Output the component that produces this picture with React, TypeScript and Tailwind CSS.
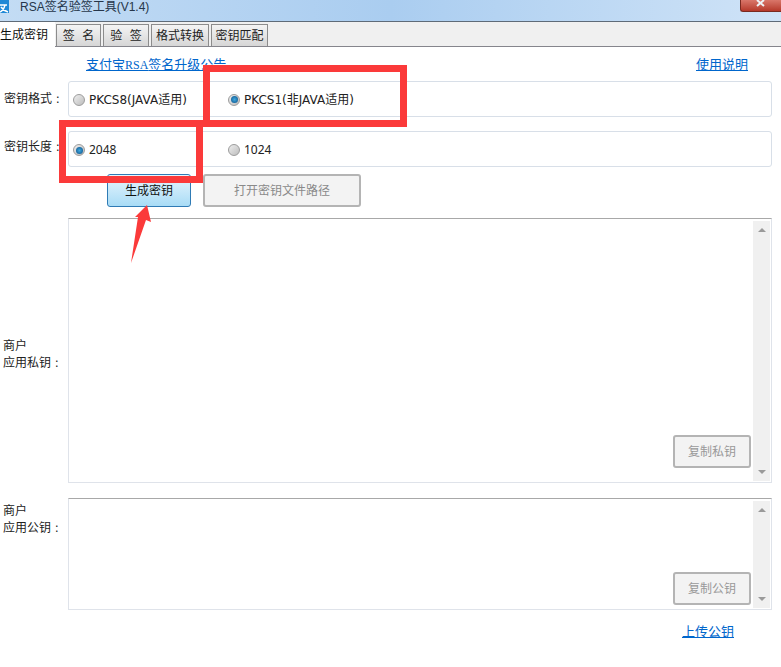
import React from "react";

const font = { fontFamily: '"DejaVu Sans","Noto Sans CJK SC",sans-serif' };

function Radio({ on, label, digits }: { on?: boolean; label: string; digits?: boolean }) {
  return (
    <div className="flex items-center gap-[4px] text-[12px] leading-none text-[#222]">
      <span className="flex h-[12px] w-[12px] items-center justify-center rounded-full border border-[#9c9c9c] bg-gradient-to-br from-[#eeeeee] to-[#bdbdbd]">
        {on && <span className="h-[7px] w-[7px] rounded-full bg-radial from-[#3fa9e0] to-[#0b4f86]" />}
      </span>
      <span style={digits ? { fontFamily: '"Noto Sans",sans-serif' } : undefined}>{label}</span>
    </div>
  );
}

function Scrollbar({ h }: { h: string }) {
  return (
    <div className={`flex w-[17px] flex-col items-center justify-between bg-[#f0f0f0] py-[7px] ${h}`}>
      <span className="h-0 w-0 border-x-[4px] border-b-[4px] border-x-transparent border-b-[#9a9a9a]" />
      <span className="h-0 w-0 border-x-[4px] border-t-[4px] border-x-transparent border-t-[#9a9a9a]" />
    </div>
  );
}

function Tab({ w, label, ml }: { w: string; label: string; ml?: string }) {
  return (
    <div className={`flex h-[22px] items-center justify-center border border-b-0 border-[#8c8c8c] bg-gradient-to-b from-[#f4f4f4] to-[#d6d6d6] text-[12px] text-[#222] ${w} ${ml ?? ""}`}>
      {label}
    </div>
  );
}

function Row({ label, children, labelPt, boxPt }: { label: string; children: React.ReactNode; labelPt: string; boxPt: string }) {
  return (
    <div className="flex h-[36px] items-start">
      <div className={`w-[68px] pl-[4px] text-[12px] leading-[16px] text-[#222] ${labelPt}`}>{label}</div>
      <div className={`flex h-[36px] w-[704px] items-center rounded-[3px] border border-[#d8dfe8] bg-white pl-[4px] ${boxPt}`}>{children}</div>
    </div>
  );
}

function KeyArea({ h, labelTop, l1, l2, btn, barH, btnBottom }: { h: string; labelTop: string; l1: string; l2: string; btn: string; barH: string; btnBottom: string }) {
  return (
    <div className="flex items-start">
      <div className={`w-[68px] pl-[3px] text-[12px] leading-[17px] text-[#222] ${labelTop}`}>
        <div>{l1}</div>
        <div>{l2}</div>
      </div>
      <div className={`relative flex w-[704px] justify-end border border-[#dfe3ea] border-t-[#a8a8a8] bg-white pt-[2px] pr-[1px] ${h}`}>
        <Scrollbar h={barH} />
        <button className={`absolute right-[20px] flex h-[33px] w-[78px] items-center justify-center rounded-[3px] border-2 border-[#b4b4b4] bg-[#f3f3f3] text-[12px] text-[#999999] ${btnBottom}`}>
          {btn}
        </button>
      </div>
    </div>
  );
}

export default function App() {
  return (
    <div className="relative h-[667px] w-[781px] overflow-hidden bg-white" style={font}>
      <div className="relative flex h-[22px] items-start border-b border-[#5f6b78] bg-gradient-to-r from-[#c3dcf4] via-[#aacdf0] to-[#cfe3f7] pl-[20px] text-[12px] leading-[14px] text-[#26364a]" style={{ fontFamily: '"Liberation Sans","Noto Sans CJK SC",sans-serif' }}>
        <svg className="absolute left-0 top-0" width="9" height="14" viewBox="0 0 9 14">
          <rect width="9" height="13" fill="#1e88d6" />
          <path d="M0 5 H7 M5 5 C4 9 2 11 0 12 M1 7 C3 10 5 11 8 12" stroke="#fff" strokeWidth="1.4" fill="none" />
        </svg>
        RSA签名验签工具(V1.4)
        <span className="absolute right-0 top-0 flex h-[12px] w-[41px] items-start justify-center rounded-bl-[3px] border-b border-l border-[#7a2a20] bg-gradient-to-b from-[#d9766a] to-[#b5382a]">
          <svg width="10" height="7" viewBox="0 0 10 7">
            <path d="M1 0 L8 6 M8 0 L1 6" stroke="#eef2f6" strokeWidth="2" />
          </svg>
        </span>
      </div>

      <div className="flex h-[25px] items-end border-b border-[#85858c] bg-[#f0f0f0]">
        <div className="relative -mb-px mr-[1px] flex h-[25px] w-[55px] items-center bg-white text-[12px] text-[#111]">生成密钥</div>
        <Tab w="w-[45px]" label={"签\u00a0\u00a0名"} />
        <Tab w="w-[46px]" ml="ml-[2px]" label={"验\u00a0\u00a0签"} />
        <Tab w="w-[58px]" ml="ml-[2px]" label="格式转换" />
        <Tab w="w-[57px]" ml="ml-[2px]" label="密钥匹配" />
      </div>

      <div className="flex h-[34px] items-start pt-[9px] text-[13px] leading-[17px] text-[#0066cc] underline">
        <span className="ml-[86px]">支付宝<span className="text-[12px]" style={{ fontFamily: '"Liberation Serif",serif' }}>RSA</span>签名升级公告</span>
        <span className="ml-auto mr-[33px]">使用说明</span>
      </div>

      <Row label="密钥格式 :" labelPt="pt-[10px]" boxPt="pt-[1px]">
        <div className="w-[155px]"><Radio label="PKCS8(JAVA适用)" /></div>
        <Radio on label="PKCS1(非JAVA适用)" />
      </Row>
      <div className="mt-[14px]">
        <Row label="密钥长度 :" labelPt="pt-[8px]" boxPt="pt-[2px]">
          <div className="w-[155px]"><Radio on digits label="2048" /></div>
          <Radio digits label="1024" />
        </Row>
      </div>

      <div className="mt-[7px] flex h-[34px] pl-[107px]">
        <button className="flex h-[33px] w-[84px] items-center justify-center rounded-[3px] border border-[#2f7bb5] bg-gradient-to-b from-[#e8f5fd] to-[#a8dcf6] text-[12px] text-[#111]">生成密钥</button>
        <button className="ml-[12px] flex h-[33px] w-[158px] items-center justify-center rounded-[3px] border-2 border-[#b4b4b4] bg-[#f3f3f3] text-[12px] text-[#8a8a8a]">打开密钥文件路径</button>
      </div>

      <div className="mt-[10px]">
        <KeyArea h="h-[265px]" labelTop="pt-[120px]" l1="商户" l2="应用私钥 :" btn="复制私钥" barH="h-[260px]" btnBottom="bottom-[14px]" />
      </div>
      <div className="mt-[15px]">
        <KeyArea h="h-[112px]" labelTop="pt-[5px]" l1="商户" l2="应用公钥 :" btn="复制公钥" barH="h-[107px]" btnBottom="bottom-[4px]" />
      </div>

      <div className="flex justify-end pr-[47px] pt-[13px] text-[13px] leading-[17px] text-[#0066cc] underline">上传公钥</div>

      {/* red annotations over the screenshot */}
      <div className="absolute left-[203px] top-[65px] h-[62px] w-[204px] border-[7px] border-[#fb3a3a]" />
      <div className="absolute left-[59px] top-[120px] h-[63px] w-[144px] border-[7px] border-[#fb3a3a]" />
      <svg className="absolute left-[128px] top-[200px]" width="26" height="66" viewBox="0 0 26 66">
        <path d="M19 5 L23 22 L18 20 L3 63 L10 17 L7 17 Z" fill="#fb3a3a" />
      </svg>
    </div>
  );
}
